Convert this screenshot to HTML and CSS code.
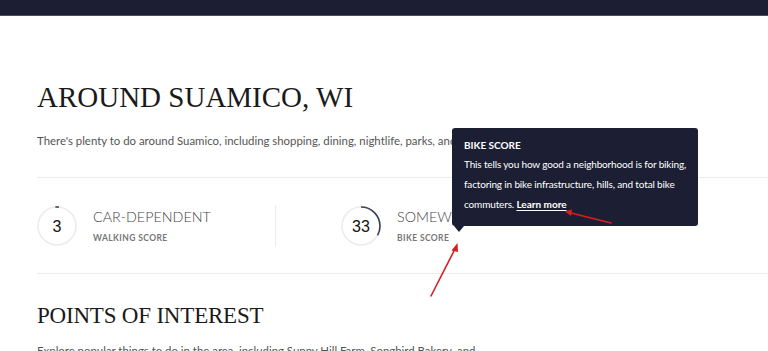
FILE: index.html
```html
<!DOCTYPE html>
<html>
<head>
<meta charset="utf-8">
<link rel="stylesheet" href="styles.css">
</head>
<body>
<div class="topbar"></div>
<main class="main">
  <h1 class="title">AROUND SUAMICO, WI</h1>
  <p class="lead">There's plenty to do around Suamico, including shopping, dining, nightlife, parks, and more. Data provided by Walk Score.</p>
  <div class="rule"></div>
  <div class="scores">
    <div class="score">
      <svg class="ring" width="40" height="40" viewBox="0 0 40 40">
        <circle cx="20" cy="20" r="19" fill="none" stroke="#ececec" stroke-width="1.6"/>
        <circle cx="20" cy="20" r="19" fill="none" stroke="#3b3e52" stroke-width="1.6" stroke-dasharray="3.6 200" transform="rotate(-95 20 20)"/>
        <text x="20" y="26" text-anchor="middle" class="ring-num">3</text>
      </svg>
      <div class="score-text">
        <div class="score-title">CAR-DEPENDENT</div>
        <div class="score-label">WALKING SCORE</div>
      </div>
    </div>
    <div class="vdiv"></div>
    <div class="score score-bike">
      <svg class="ring" width="40" height="40" viewBox="0 0 40 40">
        <circle cx="20" cy="20" r="19" fill="none" stroke="#ececec" stroke-width="1.6"/>
        <circle cx="20" cy="20" r="19" fill="none" stroke="#3b3e52" stroke-width="1.6" stroke-dasharray="39.4 200" transform="rotate(-90 20 20)"/>
        <text x="20" y="26" text-anchor="middle" class="ring-num">33</text>
      </svg>
      <div class="score-text">
        <div class="score-title">SOMEWHAT BIKEABLE</div>
        <div class="score-label">BIKE SCORE</div>
      </div>
    </div>
  </div>
  <div class="rule"></div>
  <h2 class="subtitle">POINTS OF INTEREST</h2>
  <p class="lead lead-wrap">Explore popular things to do in the area, including Sunny Hill Farm, Songbird Bakery, and Suamico Park.</p>
</main>

<div class="tooltip">
  <div class="tip-title">BIKE SCORE</div>
  <div class="tip-body">This tells you how good a neighborhood is for biking,<br>factoring in bike infrastructure, hills, and total bike<br>commuters. <a class="tip-link">Learn more</a></div>
</div>

<svg class="annot" width="768" height="351" viewBox="0 0 768 351">
  <g stroke="#d81e1e" stroke-width="1.6" fill="#d81e1e" stroke-linecap="round">
    <line x1="431" y1="296" x2="455" y2="249"/>
    <polygon points="457.5,243 451.5,250.5 458,252" stroke="none"/>
    <line x1="611" y1="223" x2="571" y2="213"/>
    <polygon points="565,211.5 572,209.5 571,216" stroke="none"/>
  </g>
</svg>
</body>
</html>
```
FILE: styles.css
```css
html, body {
  margin: 0;
  padding: 0;
  background: #ffffff;
  overflow: hidden;
}
body {
  width: 768px;
  height: 351px;
  position: relative;
  font-family: Lato, "Liberation Sans", sans-serif;
}
.topbar {
  height: 15px;
  background: #1c1f33;
  border-bottom: 1px solid #4b4e62;
}
.main {
  padding-left: 37px;
}
.title {
  font-family: "Liberation Serif", serif;
  font-weight: normal;
  font-size: 29px;
  line-height: 36px;
  letter-spacing: 0;
  color: #1a1a1a;
  margin: 63px 0 0;
}
.lead {
  font-size: 11.4px;
  line-height: 20px;
  color: #555;
  margin: 16px 0 0;
  white-space: nowrap;
}
.lead-wrap {
  white-space: normal;
  width: 440px;
}
.rule {
  height: 1px;
  background: #ececec;
  margin-top: 26px;
}
.scores {
  height: 95px;
  display: flex;
  align-items: center;
}
.score {
  display: flex;
  align-items: center;
  gap: 16px;
  width: 238px;
}
.score-bike {
  margin-left: 65px;
}
.ring {
  display: block;
  flex: none;
}
.ring-num {
  font-family: "Liberation Sans", Arial, sans-serif;
  font-size: 16px;
  fill: #111;
}
.score-text {
  display: flex;
  flex-direction: column;
  gap: 7px;
}
.score-title {
  font-size: 14.3px;
  font-weight: 300;
  line-height: 17px;
  color: #444;
  white-space: nowrap;
}
.score-label {
  font-size: 8.5px;
  font-weight: 700;
  letter-spacing: 0.4px;
  line-height: 12px;
  color: #777;
}
.vdiv {
  width: 1px;
  height: 42px;
  background: #ececec;
}
.scores + .rule {
  margin-top: 0;
}
.subtitle {
  font-family: "Liberation Serif", serif;
  font-weight: normal;
  font-size: 23px;
  line-height: 32px;
  letter-spacing: -0.2px;
  color: #1a1a1a;
  margin: 26px 0 0;
}
.subtitle + .lead {
  margin-top: 9px;
}
.tooltip {
  position: absolute;
  left: 452px;
  top: 128px;
  width: 246px;
  height: 98px;
  box-sizing: border-box;
  padding: 9px 6px 0 12px;
  background: #1c1f33;
  border-radius: 3px;
  color: #fff;
}
.tooltip::after {
  content: "";
  position: absolute;
  left: 2px;
  bottom: -6px;
  border-left: 5px solid transparent;
  border-right: 5px solid transparent;
  border-top: 6px solid #1c1f33;
}
.tip-title {
  font-size: 10px;
  font-weight: 700;
  line-height: 16px;
}
.tip-body {
  font-size: 10px;
  line-height: 20px;
  margin-top: 1px;
  letter-spacing: -0.15px;
  white-space: nowrap;
}
.tip-link {
  font-weight: 700;
  text-decoration: underline;
  text-underline-offset: 2px;
  letter-spacing: 0;
}
.annot {
  position: absolute;
  left: 0;
  top: 0;
  pointer-events: none;
}
```
